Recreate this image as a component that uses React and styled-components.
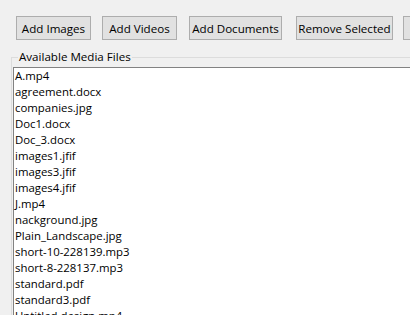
import React from "react";
import styled, { createGlobalStyle } from "styled-components";

const Global = createGlobalStyle`
  html, body { margin: 0; padding: 0; background: #f0f0f0; }
  body { font-family: "Open Sans", "Noto Sans", sans-serif; font-size: 11.4px; color: #000; }
`;

const Window = styled.div`
  width: 410px;
  height: 315px;
  overflow: hidden;
  background: #f0f0f0;
  display: flex;
  flex-direction: column;
`;

const Toolbar = styled.div`
  display: flex;
  padding: 16px 0 0 16px;
  white-space: nowrap;
`;

const Button = styled.button`
  flex: none;
  width: ${(p) => p.$w}px;
  height: 24px;
  margin: 0 0 0 ${(p) => p.$gap}px;
  padding: 0;
  background: #e1e1e1;
  border: 1px solid #adadad;
  border-radius: 0;
  font-family: inherit;
  font-size: 11.6px;
  color: #000;
  text-align: center;
`;

const Group = styled.fieldset`
  margin: 10px 0 0 11px;
  padding: 3px 0 0 1px;
  border: 1px solid #dcdcdc;
  border-right: none;
  border-bottom: none;
  min-width: 0;
  width: 500px;
  flex: none;
`;

const Legend = styled.legend`
  margin-left: 5px;
  padding: 0 1px;
  font-size: 11.6px;
  line-height: 14px;
`;

const List = styled.ul`
  list-style: none;
  margin: 0;
  padding: 0 0 0 1px;
  background: #fff;
  border-top: 1px solid #828282;
  border-left: 1px solid #828282;
  height: 300px;
`;

const Item = styled.li`
  height: 16px;
  line-height: 16px;
  white-space: nowrap;
`;

const buttons = [
  ["Add Images", 75, 0],
  ["Add Videos", 75, 11],
  ["Add Documents", 93, 12],
  ["Remove Selected", 97, 14],
  ["Clear All", 75, 10],
];

const files = [
  "A.mp4",
  "agreement.docx",
  "companies.jpg",
  "Doc1.docx",
  "Doc_3.docx",
  "images1.jfif",
  "images3.jfif",
  "images4.jfif",
  "J.mp4",
  "nackground.jpg",
  "Plain_Landscape.jpg",
  "short-10-228139.mp3",
  "short-8-228137.mp3",
  "standard.pdf",
  "standard3.pdf",
  "Untitled design.mp4",
];

export default function App() {
  return (
    <Window>
      <Global />
      <Toolbar>
        {buttons.map(([t, w, g]) => (
          <Button key={t} $w={w} $gap={g}>{t}</Button>
        ))}
      </Toolbar>
      <Group>
        <Legend>Available Media Files</Legend>
        <List>
          {files.map((f) => (
            <Item key={f}>{f}</Item>
          ))}
        </List>
      </Group>
    </Window>
  );
}
